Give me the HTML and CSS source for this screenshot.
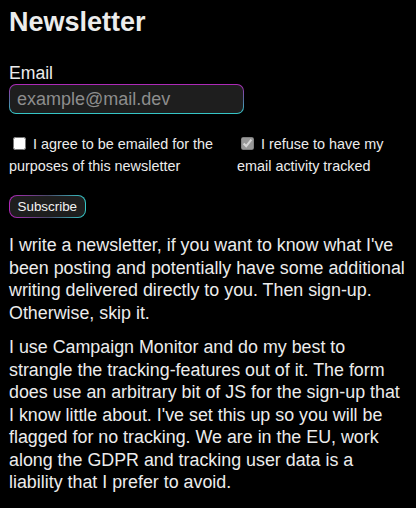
FILE: index.html
```html
<!DOCTYPE html>
<html>
<head>
<meta charset="utf-8">
<link rel="stylesheet" href="styles.css">
</head>
<body>
<section class="newsletter">
  <h2 class="title">Newsletter</h2>
  <form class="form">
    <label class="field-label" for="email">Email</label>
    <div class="input-wrap"><input id="email" class="input" type="email" placeholder="example@mail.dev"></div>
    <div class="checks">
      <label class="check"><input type="checkbox" class="box"> I agree to be emailed for the purposes of this newsletter</label>
      <label class="check"><input type="checkbox" class="box" checked disabled> I refuse to have my email activity tracked</label>
    </div>
    <div class="btn-wrap"><button type="button" class="btn">Subscribe</button></div>
  </form>
  <p class="text intro">I write a newsletter, if you want to know what I've been posting and potentially have some additional writing delivered directly to you. Then sign-up. Otherwise, skip it.</p>
  <p class="text">I use Campaign Monitor and do my best to strangle the tracking-features out of it. The form does use an arbitrary bit of JS for the sign-up that I know little about. I've set this up so you will be flagged for no tracking. We are in the EU, work along the GDPR and tracking user data is a liability that I prefer to avoid.</p>
</section>
</body>
</html>
```
FILE: styles.css
```css
html, body {
  background: #000;
}
body {
  margin: 0;
  padding: 0 7px 0 9px;
  color: #ececec;
  font-family: "Liberation Sans", Arial, sans-serif;
  font-size: 17.85px;
}
.title {
  margin: 0;
  padding-top: 5px;
  font-size: 27px;
  line-height: 34px;
  font-weight: bold;
}
.form {
  margin-top: 25px;
}
.field-label {
  display: block;
  font-size: 17.6px;
  line-height: 18px;
}
.input-wrap {
  width: 235px;
  height: 30px;
  margin-top: 2px;
  padding: 1px;
  box-sizing: border-box;
  border-radius: 7px;
  background: linear-gradient(180deg, #b028b8 0%, #5a6aa0 50%, #35c8c8 100%);
}
.input {
  display: block;
  width: 100%;
  height: 100%;
  box-sizing: border-box;
  border: 0;
  border-radius: 6px;
  background: #1e1e1e;
  color: #ddd;
  font-family: "Liberation Sans", Arial, sans-serif;
  font-size: 18px;
  padding: 0 7px;
  outline: none;
}
.input::placeholder {
  color: #8d8d8d;
}
.checks {
  display: grid;
  grid-template-columns: 228px 170px;
  margin-top: 19px;
}
.check {
  font-size: 14.4px;
  line-height: 22px;
}
.box {
  margin: 0 3px 0 4px;
  width: 13px;
  height: 13px;
  vertical-align: -1px;
}
.btn-wrap {
  display: inline-block;
  margin-top: 18px;
  padding: 1px;
  border-radius: 8px;
  background: linear-gradient(90deg, #b028b8 0%, #4a4a6a 50%, #35c8c8 100%);
}
.btn {
  display: block;
  height: 21px;
  border: 0;
  border-radius: 7px;
  background: #1e1e1e;
  color: #f2f2f2;
  font-family: "Liberation Sans", Arial, sans-serif;
  font-size: 13.4px;
  padding: 0 7.5px;
}
.text {
  margin: 12px 0 0;
  line-height: 22.5px;
}
.intro {
  margin-top: 16px;
}
```
